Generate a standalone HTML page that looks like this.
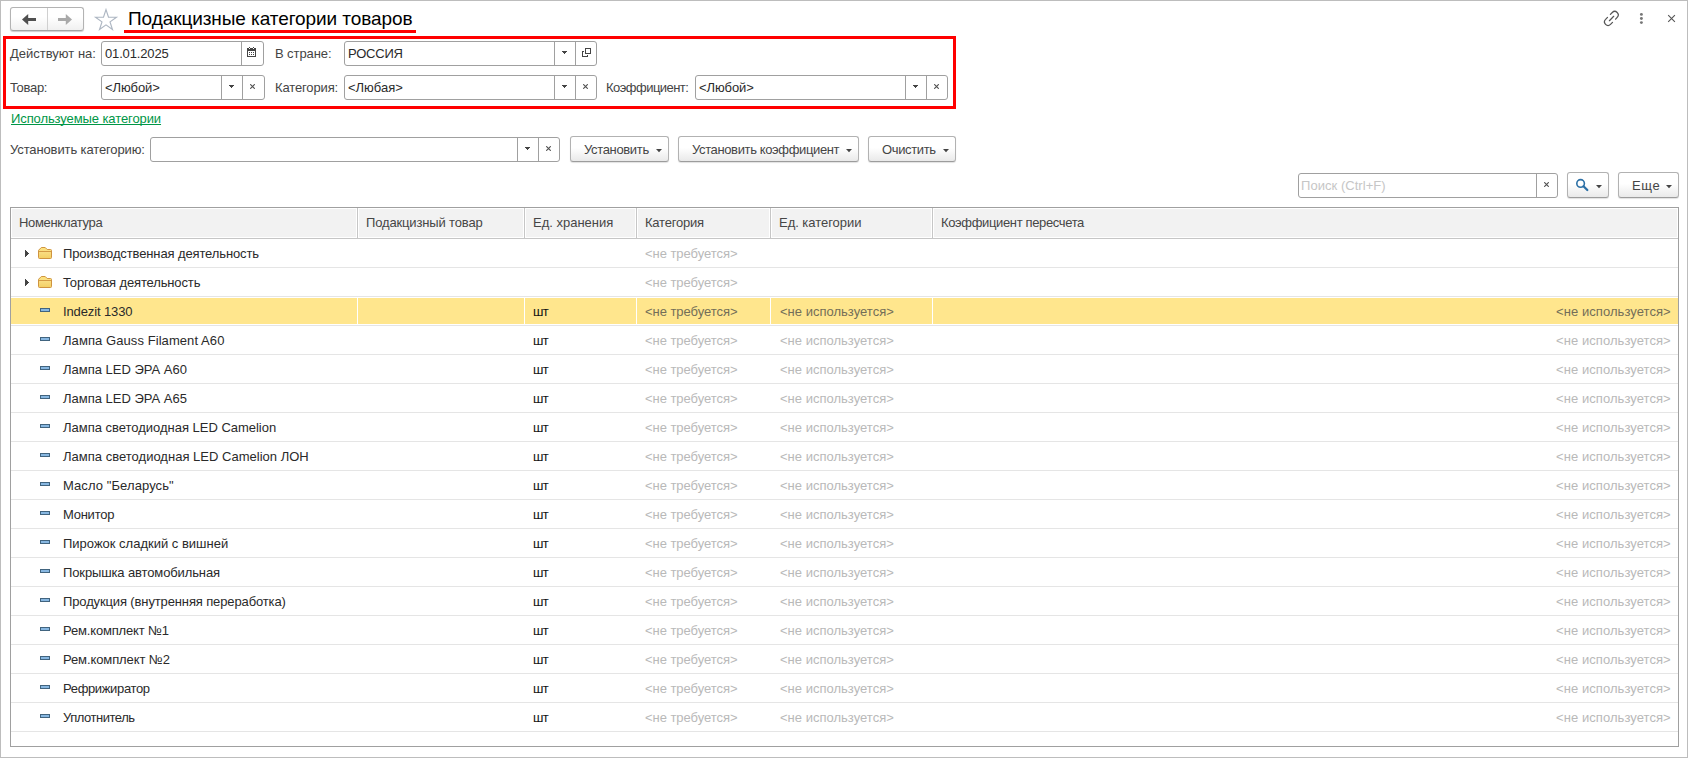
<!DOCTYPE html>
<html lang="ru"><head><meta charset="utf-8"><title>Подакцизные категории товаров</title>
<style>
html,body{margin:0;padding:0;background:#fff;}
body{width:1690px;height:758px;position:relative;overflow:hidden;font-family:"Liberation Sans",sans-serif;font-size:13px;color:#333;}
div,i,svg{position:absolute;box-sizing:border-box;}
.tx{position:relative;display:inline-block;white-space:nowrap;}
.frame{left:0;top:0;width:1688px;height:758px;border:1px solid #bdbdbd;}
.nav{left:10px;top:7px;width:74px;height:24px;border:1px solid #b3b3b3;border-bottom-color:#a2a2a2;border-radius:3px;background:linear-gradient(#fff 40%,#f0f0f0);box-shadow:0 1px 1px rgba(0,0,0,.2);}
.nav i{left:36px;top:0;width:1px;height:22px;background:#d0d0d0;}
.title{left:128px;top:8px;font-size:19px;line-height:22px;color:#000;white-space:nowrap;}
.uline{left:124px;top:30px;width:292px;height:3px;background:#f00;}
.redbox{left:3px;top:36px;width:953px;height:73px;border:3px solid #f00;}
.lbl{height:25px;line-height:25px;color:#444;white-space:nowrap;}
.link{left:11px;top:110px;height:17px;line-height:17px;color:#009646;white-space:nowrap;}
.link .tx{text-decoration:underline;text-decoration-skip-ink:none;}
.inp{height:25px;border:1px solid #a0a0a0;border-radius:3px;background:#fff;}
.it{left:3px;top:0;height:23px;line-height:23px;color:#2a2a2a;white-space:nowrap;}
.ph .it{color:#c6c6c6;}
.dv{top:0;width:1px;height:23px;background:#a0a0a0;}
.tri{fill:#444;}
.btn{height:26px;border:1px solid #b2b2b2;border-bottom-color:#9c9c9c;border-radius:3px;background:linear-gradient(#fff 45%,#e9e9e9);box-shadow:0 1px 1px rgba(0,0,0,.12);}
.bt{top:0;height:24px;line-height:25px;color:#454545;white-space:nowrap;}
.tbl{left:10px;top:207px;width:1669px;height:540px;border:1px solid #a0a0a0;background:#fff;overflow:hidden;}
.hc{top:1px;height:28px;background:#f2f2f2;}
.hd{top:0;width:1px;height:30px;background:#c6c6c6;}
.hl{left:0;top:30px;width:1667px;height:1px;background:#c6c6c6;}
.ht{top:1px;height:28px;line-height:28px;color:#464646;white-space:nowrap;}
.row{left:0;width:1667px;height:29px;border-bottom:1px solid #e5e5e5;}
.row.sel:before{content:"";position:absolute;left:0;top:1px;width:1667px;height:26px;background:#ffe68d;}
.c{top:1px;height:28px;line-height:28px;white-space:nowrap;color:#2a2a2a;}
.g{color:#b9b9b9;}
.sel .g{color:#736e58;}
.u{color:#111;}
.ws{top:1px;width:1px;height:26px;background:#fff;}
</style></head><body>
<div class="frame"></div>

<div class="nav"><i></i><svg style="left:11px;top:6px" width="15" height="11" viewBox="0 0 15 11"><path d="M0 5.5L6.2 0V3.9H14V7.1H6.2V11Z" fill="#505050"/></svg><svg style="left:46px;top:6px" width="15" height="11" viewBox="0 0 15 11"><path d="M15 5.5L8.8 0V3.9H1V7.1H8.8V11Z" fill="#a9a9a9"/></svg></div>
<svg style="left:0;top:0" width="130" height="36" viewBox="0 0 130 36"><polygon points="106.00,9.60 108.50,17.16 116.46,17.20 110.04,21.91 112.47,29.50 106.00,24.85 99.53,29.50 101.96,21.91 95.54,17.20 103.50,17.16" fill="none" stroke="#adb6c2" stroke-width="1.15"/></svg>
<div class="title"><span class="tx" id="t1" style="letter-spacing:-0.078px;margin-left:0.00px">Подакцизные категории товаров</span></div>
<div class="uline"></div>
<div class="redbox"></div>
<svg style="left:1600px;top:8px" width="24" height="22" viewBox="1600 8 24 22" fill="none" stroke="#555" stroke-width="1.25" stroke-linecap="round"><path d="M1610.4 14.4L1612.3 12.5A3.25 3.25 0 0 1 1617.2 17.3L1615.6 19.2"/><path d="M1612.5 22.4L1610.5 24.4A3.3 3.3 0 0 1 1605.6 19.4L1607.5 17.4"/><path d="M1609.4 20.7L1613.7 16.3"/></svg>
<svg style="left:1636px;top:10px" width="12" height="18" viewBox="1636 10 12 18" fill="#777"><circle cx="1641.4" cy="14.4" r="1.45"/><circle cx="1641.4" cy="18.5" r="1.45"/><circle cx="1641.4" cy="22.6" r="1.45"/></svg>
<svg style="left:1666px;top:13px" width="12" height="12" viewBox="1666 13 12 12"><path d="M1668.2 15.2L1674.9 21.9M1674.9 15.2L1668.2 21.9" stroke="#555" stroke-width="1.1" fill="none"/></svg>
<div class="lbl" style="left:10px;top:41px"><span class="tx" id="t2" style="letter-spacing:0.000px;margin-left:0.00px">Действуют на:</span></div>
<div class="inp " style="left:101px;top:41px;width:163px"><div class="it"><span class="tx" id="t3" style="letter-spacing:-0.150px;margin-left:0.00px">01.01.2025</span></div><i class="dv" style="left:139px"></i><svg style="left:145px;top:5px" width="9" height="10" viewBox="0 0 9 10" shape-rendering="crispEdges" fill="#444"><rect x="2" y="0" width="1" height="1"/><rect x="6" y="0" width="1" height="1"/><rect x="0" y="1" width="2" height="1"/><rect x="3" y="1" width="3" height="1"/><rect x="7" y="1" width="2" height="1"/><rect x="0" y="2" width="9" height="2"/><rect x="0" y="4" width="1" height="6"/><rect x="8" y="4" width="1" height="6"/><rect x="0" y="9" width="9" height="1"/><rect x="2" y="5" width="1" height="1"/><rect x="4" y="5" width="1" height="1"/><rect x="6" y="5" width="1" height="1"/><rect x="2" y="7" width="1" height="1"/><rect x="4" y="7" width="1" height="1"/><rect x="6" y="7" width="1" height="1"/></svg></div>
<div class="lbl" style="left:275px;top:41px"><span class="tx" id="t4" style="letter-spacing:-0.079px;margin-left:0.00px">В стране:</span></div>
<div class="inp " style="left:344px;top:41px;width:253px"><div class="it"><span class="tx" id="t5" style="letter-spacing:-0.216px;margin-left:0.00px">РОССИЯ</span></div><i class="dv" style="left:209px"></i><i class="dv" style="left:230px"></i><svg class="tri" style="left:217px;top:9px" width="5" height="3" viewBox="0 0 5 3" shape-rendering="crispEdges"><rect x="0" y="0" width="5" height="1"/><rect x="1" y="1" width="3" height="1"/><rect x="2" y="2" width="1" height="1"/></svg><svg style="left:237px;top:6px" width="9" height="9" viewBox="0 0 9 9" shape-rendering="crispEdges" fill="#444"><rect x="3" y="0" width="6" height="1"/><rect x="3" y="5" width="6" height="1"/><rect x="3" y="0" width="1" height="6"/><rect x="8" y="0" width="1" height="6"/><rect x="0" y="3" width="2" height="1"/><rect x="0" y="3" width="1" height="6"/><rect x="0" y="8" width="6" height="1"/><rect x="5" y="7" width="1" height="2"/></svg></div>
<div class="lbl" style="left:10px;top:75px"><span class="tx" id="t6" style="letter-spacing:-0.306px;margin-left:0.00px">Товар:</span></div>
<div class="inp " style="left:101px;top:75px;width:164px"><div class="it"><span class="tx" id="t7" style="letter-spacing:-0.105px;margin-left:0.00px">&lt;Любой&gt;</span></div><i class="dv" style="left:119px"></i><i class="dv" style="left:140px"></i><svg class="tri" style="left:127px;top:9px" width="5" height="3" viewBox="0 0 5 3" shape-rendering="crispEdges"><rect x="0" y="0" width="5" height="1"/><rect x="1" y="1" width="3" height="1"/><rect x="2" y="2" width="1" height="1"/></svg><svg style="left:148px;top:8px" width="5" height="5" viewBox="0 0 5 5"><path d="M0.2 0.2L4.8 4.8M4.8 0.2L0.2 4.8" stroke="#505050" stroke-width="1.1" fill="none"/></svg></div>
<div class="lbl" style="left:275px;top:75px"><span class="tx" id="t8" style="letter-spacing:-0.130px;margin-left:0.00px">Категория:</span></div>
<div class="inp " style="left:344px;top:75px;width:253px"><div class="it"><span class="tx" id="t9" style="letter-spacing:0.000px;margin-left:0.00px">&lt;Любая&gt;</span></div><i class="dv" style="left:209px"></i><i class="dv" style="left:230px"></i><svg class="tri" style="left:217px;top:9px" width="5" height="3" viewBox="0 0 5 3" shape-rendering="crispEdges"><rect x="0" y="0" width="5" height="1"/><rect x="1" y="1" width="3" height="1"/><rect x="2" y="2" width="1" height="1"/></svg><svg style="left:238px;top:8px" width="5" height="5" viewBox="0 0 5 5"><path d="M0.2 0.2L4.8 4.8M4.8 0.2L0.2 4.8" stroke="#505050" stroke-width="1.1" fill="none"/></svg></div>
<div class="lbl" style="left:606px;top:75px"><span class="tx" id="t10" style="letter-spacing:-0.534px;margin-left:0.00px">Коэффициент:</span></div>
<div class="inp " style="left:695px;top:75px;width:253px"><div class="it"><span class="tx" id="t11" style="letter-spacing:-0.090px;margin-left:0.00px">&lt;Любой&gt;</span></div><i class="dv" style="left:209px"></i><i class="dv" style="left:230px"></i><svg class="tri" style="left:217px;top:9px" width="5" height="3" viewBox="0 0 5 3" shape-rendering="crispEdges"><rect x="0" y="0" width="5" height="1"/><rect x="1" y="1" width="3" height="1"/><rect x="2" y="2" width="1" height="1"/></svg><svg style="left:238px;top:8px" width="5" height="5" viewBox="0 0 5 5"><path d="M0.2 0.2L4.8 4.8M4.8 0.2L0.2 4.8" stroke="#505050" stroke-width="1.1" fill="none"/></svg></div>
<div class="link"><span class="tx" id="t12" style="letter-spacing:-0.094px;margin-left:0.00px">Используемые категории</span></div>
<div class="lbl" style="left:10px;top:137px"><span class="tx" id="t13" style="letter-spacing:-0.120px;margin-left:0.00px">Установить категорию:</span></div>
<div class="inp " style="left:150px;top:137px;width:410px"><i class="dv" style="left:366px"></i><i class="dv" style="left:387px"></i><svg class="tri" style="left:374px;top:9px" width="5" height="3" viewBox="0 0 5 3" shape-rendering="crispEdges"><rect x="0" y="0" width="5" height="1"/><rect x="1" y="1" width="3" height="1"/><rect x="2" y="2" width="1" height="1"/></svg><svg style="left:395px;top:8px" width="5" height="5" viewBox="0 0 5 5"><path d="M0.2 0.2L4.8 4.8M4.8 0.2L0.2 4.8" stroke="#505050" stroke-width="1.1" fill="none"/></svg></div>
<div class="btn" style="left:570px;top:136px;width:99px"><div class="bt" style="left:13px"><span class="tx" id="t14" style="letter-spacing:-0.340px;margin-left:0.00px">Установить</span></div><svg class="tri" style="left:85px;top:12px" width="6" height="4" viewBox="0 0 6 4"><path d="M0 0H6L3 3.3Z"/></svg></div>
<div class="btn" style="left:678px;top:136px;width:181px"><div class="bt" style="left:13px"><span class="tx" id="t15" style="letter-spacing:-0.369px;margin-left:0.00px">Установить коэффициент</span></div><svg class="tri" style="left:167px;top:12px" width="6" height="4" viewBox="0 0 6 4"><path d="M0 0H6L3 3.3Z"/></svg></div>
<div class="btn" style="left:868px;top:136px;width:88px"><div class="bt" style="left:13px"><span class="tx" id="t16" style="letter-spacing:-0.360px;margin-left:0.00px">Очистить</span></div><svg class="tri" style="left:74px;top:12px" width="6" height="4" viewBox="0 0 6 4"><path d="M0 0H6L3 3.3Z"/></svg></div>
<div class="inp ph" style="left:1298px;top:173px;width:260px"><div class="it"><span class="tx" id="t17" style="letter-spacing:0.042px;margin-left:-1.00px">Поиск (Ctrl+F)</span></div><i class="dv" style="left:237px"></i><svg style="left:245px;top:8px" width="5" height="5" viewBox="0 0 5 5"><path d="M0.2 0.2L4.8 4.8M4.8 0.2L0.2 4.8" stroke="#505050" stroke-width="1.1" fill="none"/></svg></div>
<div class="btn" style="left:1567px;top:172px;width:42px"><svg style="left:8px;top:5px" width="14" height="14" viewBox="0 0 14 14" fill="none" stroke="#2c70a6"><circle cx="4.6" cy="5.4" r="3.8" stroke-width="1.6"/><path d="M7.5 8.3L11.3 12.0" stroke-width="2.3" stroke-linecap="round"/></svg><svg class="tri" style="left:28px;top:12px" width="6" height="4" viewBox="0 0 6 4"><path d="M0 0H6L3 3.3Z"/></svg></div>
<div class="btn" style="left:1618px;top:172px;width:61px"><div class="bt" style="left:13px"><span class="tx" id="t18" style="letter-spacing:0.675px;margin-left:0.00px">Еще</span></div><svg class="tri" style="left:47px;top:12px" width="6" height="4" viewBox="0 0 6 4"><path d="M0 0H6L3 3.3Z"/></svg></div>
<div class="tbl">
<div class="hc" style="left:1px;width:344px"></div>
<div class="ht" style="left:8px"><span class="tx" id="t19" style="letter-spacing:-0.320px;margin-left:0.00px">Номенклатура</span></div>
<div class="hc" style="left:348px;width:164px"></div>
<div class="ht" style="left:355px"><span class="tx" id="t20" style="letter-spacing:-0.146px;margin-left:0.00px">Подакцизный товар</span></div>
<div class="hc" style="left:515px;width:109px"></div>
<div class="ht" style="left:522px"><span class="tx" id="t21" style="letter-spacing:0.000px;margin-left:0.00px">Ед. хранения</span></div>
<div class="hc" style="left:627px;width:131px"></div>
<div class="ht" style="left:634px"><span class="tx" id="t22" style="letter-spacing:-0.203px;margin-left:0.00px">Категория</span></div>
<div class="hc" style="left:761px;width:159px"></div>
<div class="ht" style="left:768px"><span class="tx" id="t23" style="letter-spacing:-0.030px;margin-left:0.00px">Ед. категории</span></div>
<div class="hc" style="left:923px;width:743px"></div>
<div class="ht" style="left:930px"><span class="tx" id="t24" style="letter-spacing:-0.357px;margin-left:0.00px">Коэффициент пересчета</span></div>
<i class="hd" style="left:346px"></i>
<i class="hd" style="left:513px"></i>
<i class="hd" style="left:625px"></i>
<i class="hd" style="left:759px"></i>
<i class="hd" style="left:921px"></i>
<i class="hl"></i>
<svg style="left:0;top:0" width="0" height="0"><defs><linearGradient id="fg" x1="0" y1="0" x2="0" y2="1"><stop offset="0" stop-color="#fde37c"/><stop offset="0.4" stop-color="#f9dd83"/><stop offset="1" stop-color="#f3cf63"/></linearGradient></defs></svg>
<div class="row" style="top:31px"><svg style="left:14px;top:11px" width="4" height="7" viewBox="0 0 4 7" shape-rendering="crispEdges" fill="#444"><rect x="0" y="0" width="1" height="7"/><rect x="1" y="1" width="1" height="5"/><rect x="2" y="2" width="1" height="3"/><rect x="3" y="3" width="1" height="1"/></svg><svg style="left:27px;top:8px" width="14" height="12" viewBox="0 0 14 12"><path d="M0.5 3.3L3.3 0.5H7.2L9.2 2.5H12.5Q13.5 2.5 13.5 3.5V10.5Q13.5 11.5 12.5 11.5H1.5Q0.5 11.5 0.5 10.5Z" fill="url(#fg)" stroke="#cf9440" stroke-width="1"/><path d="M1 4.5H13" stroke="#d39a45" stroke-width="1"/></svg><div class="c" style="left:52px"><span class="tx" id="t25" style="letter-spacing:-0.122px;margin-left:0.00px">Производственная деятельность</span></div><div class="c g" style="left:634px"><span class="tx" id="t26" style="letter-spacing:-0.048px;margin-left:0.00px">&lt;не требуется&gt;</span></div></div>
<div class="row" style="top:60px"><svg style="left:14px;top:11px" width="4" height="7" viewBox="0 0 4 7" shape-rendering="crispEdges" fill="#444"><rect x="0" y="0" width="1" height="7"/><rect x="1" y="1" width="1" height="5"/><rect x="2" y="2" width="1" height="3"/><rect x="3" y="3" width="1" height="1"/></svg><svg style="left:27px;top:8px" width="14" height="12" viewBox="0 0 14 12"><path d="M0.5 3.3L3.3 0.5H7.2L9.2 2.5H12.5Q13.5 2.5 13.5 3.5V10.5Q13.5 11.5 12.5 11.5H1.5Q0.5 11.5 0.5 10.5Z" fill="url(#fg)" stroke="#cf9440" stroke-width="1"/><path d="M1 4.5H13" stroke="#d39a45" stroke-width="1"/></svg><div class="c" style="left:52px"><span class="tx" id="t27" style="letter-spacing:-0.138px;margin-left:0.00px">Торговая деятельность</span></div><div class="c g" style="left:634px"><span class="tx" id="t28" style="letter-spacing:-0.048px;margin-left:0.00px">&lt;не требуется&gt;</span></div></div>
<div class="row sel" style="top:89px"><svg style="left:29px;top:11px" width="10" height="4" viewBox="0 0 10 4" shape-rendering="crispEdges"><rect x="0" y="0" width="10" height="4" fill="#41647f"/><rect x="1" y="1" width="8" height="2" fill="#87b7e1"/></svg><div class="c" style="left:52px"><span class="tx" id="t29" style="letter-spacing:-0.120px;margin-left:0.00px">Indezit 1330</span></div><div class="c u" style="left:522px"><span class="tx" id="t30" style="letter-spacing:-0.600px;margin-left:0.00px">шт</span></div><div class="c g" style="left:634px"><span class="tx" id="t31" style="letter-spacing:-0.048px;margin-left:0.00px">&lt;не требуется&gt;</span></div><div class="c g" style="left:768px"><span class="tx" id="t32" style="letter-spacing:0.012px;margin-left:1.00px">&lt;не используется&gt;</span></div><div class="c g" style="left:1544px"><span class="tx" id="t33" style="letter-spacing:0.068px;margin-left:1.00px">&lt;не используется&gt;</span></div><i class="ws" style="left:346px"></i><i class="ws" style="left:513px"></i><i class="ws" style="left:625px"></i><i class="ws" style="left:759px"></i><i class="ws" style="left:921px"></i></div>
<div class="row" style="top:118px"><svg style="left:29px;top:11px" width="10" height="4" viewBox="0 0 10 4" shape-rendering="crispEdges"><rect x="0" y="0" width="10" height="4" fill="#41647f"/><rect x="1" y="1" width="8" height="2" fill="#87b7e1"/></svg><div class="c" style="left:52px"><span class="tx" id="t34" style="letter-spacing:0.075px;margin-left:0.00px">Лампа Gauss Filament A60</span></div><div class="c u" style="left:522px"><span class="tx" id="t35" style="letter-spacing:-0.600px;margin-left:0.00px">шт</span></div><div class="c g" style="left:634px"><span class="tx" id="t36" style="letter-spacing:-0.048px;margin-left:0.00px">&lt;не требуется&gt;</span></div><div class="c g" style="left:768px"><span class="tx" id="t37" style="letter-spacing:0.012px;margin-left:1.00px">&lt;не используется&gt;</span></div><div class="c g" style="left:1544px"><span class="tx" id="t38" style="letter-spacing:0.068px;margin-left:1.00px">&lt;не используется&gt;</span></div></div>
<div class="row" style="top:147px"><svg style="left:29px;top:11px" width="10" height="4" viewBox="0 0 10 4" shape-rendering="crispEdges"><rect x="0" y="0" width="10" height="4" fill="#41647f"/><rect x="1" y="1" width="8" height="2" fill="#87b7e1"/></svg><div class="c" style="left:52px"><span class="tx" id="t39" style="letter-spacing:-0.005px;margin-left:0.00px">Лампа LED ЭРА A60</span></div><div class="c u" style="left:522px"><span class="tx" id="t40" style="letter-spacing:-0.600px;margin-left:0.00px">шт</span></div><div class="c g" style="left:634px"><span class="tx" id="t41" style="letter-spacing:-0.048px;margin-left:0.00px">&lt;не требуется&gt;</span></div><div class="c g" style="left:768px"><span class="tx" id="t42" style="letter-spacing:0.012px;margin-left:1.00px">&lt;не используется&gt;</span></div><div class="c g" style="left:1544px"><span class="tx" id="t43" style="letter-spacing:0.068px;margin-left:1.00px">&lt;не используется&gt;</span></div></div>
<div class="row" style="top:176px"><svg style="left:29px;top:11px" width="10" height="4" viewBox="0 0 10 4" shape-rendering="crispEdges"><rect x="0" y="0" width="10" height="4" fill="#41647f"/><rect x="1" y="1" width="8" height="2" fill="#87b7e1"/></svg><div class="c" style="left:52px"><span class="tx" id="t44" style="letter-spacing:-0.005px;margin-left:0.00px">Лампа LED ЭРА A65</span></div><div class="c u" style="left:522px"><span class="tx" id="t45" style="letter-spacing:-0.600px;margin-left:0.00px">шт</span></div><div class="c g" style="left:634px"><span class="tx" id="t46" style="letter-spacing:-0.048px;margin-left:0.00px">&lt;не требуется&gt;</span></div><div class="c g" style="left:768px"><span class="tx" id="t47" style="letter-spacing:0.012px;margin-left:1.00px">&lt;не используется&gt;</span></div><div class="c g" style="left:1544px"><span class="tx" id="t48" style="letter-spacing:0.068px;margin-left:1.00px">&lt;не используется&gt;</span></div></div>
<div class="row" style="top:205px"><svg style="left:29px;top:11px" width="10" height="4" viewBox="0 0 10 4" shape-rendering="crispEdges"><rect x="0" y="0" width="10" height="4" fill="#41647f"/><rect x="1" y="1" width="8" height="2" fill="#87b7e1"/></svg><div class="c" style="left:52px"><span class="tx" id="t49" style="letter-spacing:-0.015px;margin-left:0.00px">Лампа светодиодная LED Camelion</span></div><div class="c u" style="left:522px"><span class="tx" id="t50" style="letter-spacing:-0.600px;margin-left:0.00px">шт</span></div><div class="c g" style="left:634px"><span class="tx" id="t51" style="letter-spacing:-0.048px;margin-left:0.00px">&lt;не требуется&gt;</span></div><div class="c g" style="left:768px"><span class="tx" id="t52" style="letter-spacing:0.012px;margin-left:1.00px">&lt;не используется&gt;</span></div><div class="c g" style="left:1544px"><span class="tx" id="t53" style="letter-spacing:0.068px;margin-left:1.00px">&lt;не используется&gt;</span></div></div>
<div class="row" style="top:234px"><svg style="left:29px;top:11px" width="10" height="4" viewBox="0 0 10 4" shape-rendering="crispEdges"><rect x="0" y="0" width="10" height="4" fill="#41647f"/><rect x="1" y="1" width="8" height="2" fill="#87b7e1"/></svg><div class="c" style="left:52px"><span class="tx" id="t54" style="letter-spacing:0.013px;margin-left:0.00px">Лампа светодиодная LED Camelion ЛОН</span></div><div class="c u" style="left:522px"><span class="tx" id="t55" style="letter-spacing:-0.600px;margin-left:0.00px">шт</span></div><div class="c g" style="left:634px"><span class="tx" id="t56" style="letter-spacing:-0.048px;margin-left:0.00px">&lt;не требуется&gt;</span></div><div class="c g" style="left:768px"><span class="tx" id="t57" style="letter-spacing:0.012px;margin-left:1.00px">&lt;не используется&gt;</span></div><div class="c g" style="left:1544px"><span class="tx" id="t58" style="letter-spacing:0.068px;margin-left:1.00px">&lt;не используется&gt;</span></div></div>
<div class="row" style="top:263px"><svg style="left:29px;top:11px" width="10" height="4" viewBox="0 0 10 4" shape-rendering="crispEdges"><rect x="0" y="0" width="10" height="4" fill="#41647f"/><rect x="1" y="1" width="8" height="2" fill="#87b7e1"/></svg><div class="c" style="left:52px"><span class="tx" id="t59" style="letter-spacing:0.084px;margin-left:0.00px">Масло "Беларусь"</span></div><div class="c u" style="left:522px"><span class="tx" id="t60" style="letter-spacing:-0.600px;margin-left:0.00px">шт</span></div><div class="c g" style="left:634px"><span class="tx" id="t61" style="letter-spacing:-0.048px;margin-left:0.00px">&lt;не требуется&gt;</span></div><div class="c g" style="left:768px"><span class="tx" id="t62" style="letter-spacing:0.012px;margin-left:1.00px">&lt;не используется&gt;</span></div><div class="c g" style="left:1544px"><span class="tx" id="t63" style="letter-spacing:0.068px;margin-left:1.00px">&lt;не используется&gt;</span></div></div>
<div class="row" style="top:292px"><svg style="left:29px;top:11px" width="10" height="4" viewBox="0 0 10 4" shape-rendering="crispEdges"><rect x="0" y="0" width="10" height="4" fill="#41647f"/><rect x="1" y="1" width="8" height="2" fill="#87b7e1"/></svg><div class="c" style="left:52px"><span class="tx" id="t64" style="letter-spacing:-0.255px;margin-left:0.00px">Монитор</span></div><div class="c u" style="left:522px"><span class="tx" id="t65" style="letter-spacing:-0.600px;margin-left:0.00px">шт</span></div><div class="c g" style="left:634px"><span class="tx" id="t66" style="letter-spacing:-0.048px;margin-left:0.00px">&lt;не требуется&gt;</span></div><div class="c g" style="left:768px"><span class="tx" id="t67" style="letter-spacing:0.012px;margin-left:1.00px">&lt;не используется&gt;</span></div><div class="c g" style="left:1544px"><span class="tx" id="t68" style="letter-spacing:0.068px;margin-left:1.00px">&lt;не используется&gt;</span></div></div>
<div class="row" style="top:321px"><svg style="left:29px;top:11px" width="10" height="4" viewBox="0 0 10 4" shape-rendering="crispEdges"><rect x="0" y="0" width="10" height="4" fill="#41647f"/><rect x="1" y="1" width="8" height="2" fill="#87b7e1"/></svg><div class="c" style="left:52px"><span class="tx" id="t69" style="letter-spacing:-0.003px;margin-left:0.00px">Пирожок сладкий с вишней</span></div><div class="c u" style="left:522px"><span class="tx" id="t70" style="letter-spacing:-0.600px;margin-left:0.00px">шт</span></div><div class="c g" style="left:634px"><span class="tx" id="t71" style="letter-spacing:-0.048px;margin-left:0.00px">&lt;не требуется&gt;</span></div><div class="c g" style="left:768px"><span class="tx" id="t72" style="letter-spacing:0.012px;margin-left:1.00px">&lt;не используется&gt;</span></div><div class="c g" style="left:1544px"><span class="tx" id="t73" style="letter-spacing:0.068px;margin-left:1.00px">&lt;не используется&gt;</span></div></div>
<div class="row" style="top:350px"><svg style="left:29px;top:11px" width="10" height="4" viewBox="0 0 10 4" shape-rendering="crispEdges"><rect x="0" y="0" width="10" height="4" fill="#41647f"/><rect x="1" y="1" width="8" height="2" fill="#87b7e1"/></svg><div class="c" style="left:52px"><span class="tx" id="t74" style="letter-spacing:-0.125px;margin-left:0.00px">Покрышка автомобильная</span></div><div class="c u" style="left:522px"><span class="tx" id="t75" style="letter-spacing:-0.600px;margin-left:0.00px">шт</span></div><div class="c g" style="left:634px"><span class="tx" id="t76" style="letter-spacing:-0.048px;margin-left:0.00px">&lt;не требуется&gt;</span></div><div class="c g" style="left:768px"><span class="tx" id="t77" style="letter-spacing:0.012px;margin-left:1.00px">&lt;не используется&gt;</span></div><div class="c g" style="left:1544px"><span class="tx" id="t78" style="letter-spacing:0.068px;margin-left:1.00px">&lt;не используется&gt;</span></div></div>
<div class="row" style="top:379px"><svg style="left:29px;top:11px" width="10" height="4" viewBox="0 0 10 4" shape-rendering="crispEdges"><rect x="0" y="0" width="10" height="4" fill="#41647f"/><rect x="1" y="1" width="8" height="2" fill="#87b7e1"/></svg><div class="c" style="left:52px"><span class="tx" id="t79" style="letter-spacing:-0.128px;margin-left:0.00px">Продукция (внутренняя переработка)</span></div><div class="c u" style="left:522px"><span class="tx" id="t80" style="letter-spacing:-0.600px;margin-left:0.00px">шт</span></div><div class="c g" style="left:634px"><span class="tx" id="t81" style="letter-spacing:-0.048px;margin-left:0.00px">&lt;не требуется&gt;</span></div><div class="c g" style="left:768px"><span class="tx" id="t82" style="letter-spacing:0.012px;margin-left:1.00px">&lt;не используется&gt;</span></div><div class="c g" style="left:1544px"><span class="tx" id="t83" style="letter-spacing:0.068px;margin-left:1.00px">&lt;не используется&gt;</span></div></div>
<div class="row" style="top:408px"><svg style="left:29px;top:11px" width="10" height="4" viewBox="0 0 10 4" shape-rendering="crispEdges"><rect x="0" y="0" width="10" height="4" fill="#41647f"/><rect x="1" y="1" width="8" height="2" fill="#87b7e1"/></svg><div class="c" style="left:52px"><span class="tx" id="t84" style="letter-spacing:-0.167px;margin-left:0.00px">Рем.комплект №1</span></div><div class="c u" style="left:522px"><span class="tx" id="t85" style="letter-spacing:-0.600px;margin-left:0.00px">шт</span></div><div class="c g" style="left:634px"><span class="tx" id="t86" style="letter-spacing:-0.048px;margin-left:0.00px">&lt;не требуется&gt;</span></div><div class="c g" style="left:768px"><span class="tx" id="t87" style="letter-spacing:0.012px;margin-left:1.00px">&lt;не используется&gt;</span></div><div class="c g" style="left:1544px"><span class="tx" id="t88" style="letter-spacing:0.068px;margin-left:1.00px">&lt;не используется&gt;</span></div></div>
<div class="row" style="top:437px"><svg style="left:29px;top:11px" width="10" height="4" viewBox="0 0 10 4" shape-rendering="crispEdges"><rect x="0" y="0" width="10" height="4" fill="#41647f"/><rect x="1" y="1" width="8" height="2" fill="#87b7e1"/></svg><div class="c" style="left:52px"><span class="tx" id="t89" style="letter-spacing:-0.103px;margin-left:0.00px">Рем.комплект №2</span></div><div class="c u" style="left:522px"><span class="tx" id="t90" style="letter-spacing:-0.600px;margin-left:0.00px">шт</span></div><div class="c g" style="left:634px"><span class="tx" id="t91" style="letter-spacing:-0.048px;margin-left:0.00px">&lt;не требуется&gt;</span></div><div class="c g" style="left:768px"><span class="tx" id="t92" style="letter-spacing:0.012px;margin-left:1.00px">&lt;не используется&gt;</span></div><div class="c g" style="left:1544px"><span class="tx" id="t93" style="letter-spacing:0.068px;margin-left:1.00px">&lt;не используется&gt;</span></div></div>
<div class="row" style="top:466px"><svg style="left:29px;top:11px" width="10" height="4" viewBox="0 0 10 4" shape-rendering="crispEdges"><rect x="0" y="0" width="10" height="4" fill="#41647f"/><rect x="1" y="1" width="8" height="2" fill="#87b7e1"/></svg><div class="c" style="left:52px"><span class="tx" id="t94" style="letter-spacing:-0.351px;margin-left:0.00px">Рефрижиратор</span></div><div class="c u" style="left:522px"><span class="tx" id="t95" style="letter-spacing:-0.600px;margin-left:0.00px">шт</span></div><div class="c g" style="left:634px"><span class="tx" id="t96" style="letter-spacing:-0.048px;margin-left:0.00px">&lt;не требуется&gt;</span></div><div class="c g" style="left:768px"><span class="tx" id="t97" style="letter-spacing:0.012px;margin-left:1.00px">&lt;не используется&gt;</span></div><div class="c g" style="left:1544px"><span class="tx" id="t98" style="letter-spacing:0.068px;margin-left:1.00px">&lt;не используется&gt;</span></div></div>
<div class="row" style="top:495px"><svg style="left:29px;top:11px" width="10" height="4" viewBox="0 0 10 4" shape-rendering="crispEdges"><rect x="0" y="0" width="10" height="4" fill="#41647f"/><rect x="1" y="1" width="8" height="2" fill="#87b7e1"/></svg><div class="c" style="left:52px"><span class="tx" id="t99" style="letter-spacing:-0.468px;margin-left:0.00px">Уплотнитель</span></div><div class="c u" style="left:522px"><span class="tx" id="t100" style="letter-spacing:-0.600px;margin-left:0.00px">шт</span></div><div class="c g" style="left:634px"><span class="tx" id="t101" style="letter-spacing:-0.048px;margin-left:0.00px">&lt;не требуется&gt;</span></div><div class="c g" style="left:768px"><span class="tx" id="t102" style="letter-spacing:0.012px;margin-left:1.00px">&lt;не используется&gt;</span></div><div class="c g" style="left:1544px"><span class="tx" id="t103" style="letter-spacing:0.068px;margin-left:1.00px">&lt;не используется&gt;</span></div></div>
</div>
</body></html>
